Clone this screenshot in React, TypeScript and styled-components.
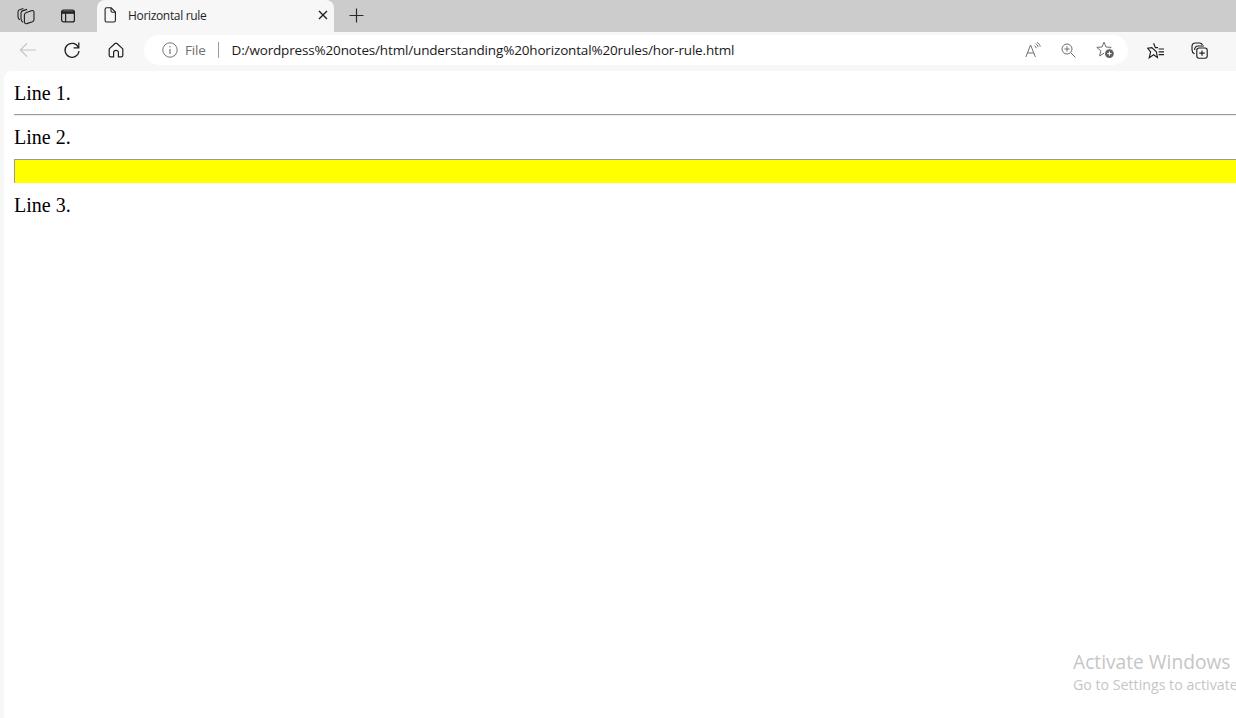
import React from 'react'
import styled, { createGlobalStyle } from 'styled-components'

const GlobalStyle = createGlobalStyle`
    html, body {
        margin: 0;
        padding: 0;
        height: 100%;
        overflow: hidden;
        background: #f7f7f7;
    }
    #root {
        height: 100%;
    }
`

//Browser chrome icons
const CollectionsTabIcon = () => (
    <svg width="18" height="18" viewBox="0 0 18 18" fill="none" stroke="#1f1f1f" strokeWidth="1.1">
        <path d="M6.4 1.6 L2.6 2.8 C1.6 3.1 1 3.9 1 5 V9.4 C1 10.8 1.6 12 2.8 12.8" />
        <path d="M10 2.4 L6 3.6 C5 3.9 4 4.8 4 6 V11.6 C4 13.2 4.8 14.6 6 15.4" />
        <path d="M9.4 5.4 L15 3.6 C16.2 3.3 17 4 17 5.2 V12.6 C17 13.6 16.4 14.4 15.4 14.8 L9.8 16.6 C8.4 17 7.4 16.2 7.4 15 V7.8 C7.4 6.6 8.2 5.8 9.4 5.4 Z" />
    </svg>
)

const VerticalTabsIcon = () => (
    <svg width="16" height="16" viewBox="0 0 16 16" fill="none" stroke="#1f1f1f" strokeWidth="1.2">
        <rect x="1.6" y="2.1" width="12.8" height="11.8" rx="2" />
        <path d="M5.6 5.6 V13.6" />
        <path d="M2 3.8 H14 V5.2 H2 Z" fill="#1f1f1f" />
    </svg>
)

const PageIcon = () => (
    <svg width="14" height="16" viewBox="0 0 14 16" fill="none" stroke="#1f1f1f" strokeWidth="1.1">
        <path d="M2.1 2.4 C2.1 1.4 2.8 0.8 3.6 0.8 H8.2 L12.4 5 V13.4 C12.4 14.4 11.7 15 10.9 15 H3.6 C2.8 15 2.1 14.4 2.1 13.4 Z" />
        <path d="M8 1 V3.8 C8 4.7 8.6 5.2 9.4 5.2 H12.2" />
    </svg>
)

const CloseIcon = () => (
    <svg width="10" height="10" viewBox="0 0 10 10" stroke="#1f1f1f" strokeWidth="1.4">
        <path d="M1 1 L9 9 M9 1 L1 9" />
    </svg>
)

const PlusIcon = () => (
    <svg width="15" height="15" viewBox="0 0 15 15" stroke="#2a2a2a" strokeWidth="1.2">
        <path d="M7.5 0.5 V14.5 M0.5 7.5 H14.5" />
    </svg>
)

const BackIcon = () => (
    <svg width="18" height="16" viewBox="0 0 18 16" fill="none" stroke="#c4c4c4" strokeWidth="1.2">
        <path d="M17 8 H1.4 M8 1.4 L1.4 8 L8 14.6" />
    </svg>
)

const RefreshIcon = () => (
    <svg width="18" height="18" viewBox="0 0 18 18" fill="none" stroke="#1f1f1f" strokeWidth="1.25">
        <path d="M15.4 6.4 A7 7 0 1 0 16 10" />
        <path d="M15.8 1.6 V6.8 H10.6" />
    </svg>
)

const HomeIcon = () => (
    <svg width="16" height="16" viewBox="0 0 16 16" fill="none" stroke="#1f1f1f" strokeWidth="1.2">
        <path d="M1.2 6.9 L7 1.5 C7.6 1 8.4 1 9 1.5 L14.8 6.9 V13.6 C14.8 14.3 14.3 14.8 13.6 14.8 H10.4 V10.4 C10.4 9.2 9.4 8.4 8 8.4 C6.6 8.4 5.6 9.2 5.6 10.4 V14.8 H2.4 C1.7 14.8 1.2 14.3 1.2 13.6 Z" />
    </svg>
)

const InfoIcon = () => (
    <svg width="16" height="16" viewBox="0 0 16 16" fill="none" stroke="#767676" strokeWidth="1">
        <circle cx="8" cy="8" r="7.2" />
        <path d="M8 7 V12" strokeWidth="1.2" />
        <circle cx="8" cy="4.8" r="0.7" fill="#767676" stroke="none" />
    </svg>
)

const ReadAloudIcon = () => (
    <svg width="16" height="16" viewBox="0 0 16 16" fill="none" stroke="#6f6f6f" strokeWidth="1">
        <path d="M0.8 15 L5.6 3 L10.4 15 M2.4 11 H8.8" />
        <path d="M9.4 3.6 C10.4 4.2 11 5 11.2 6.2 M10.6 1.6 C12 2.4 12.8 3.6 13 5 M12 0.4 C13.8 1.2 15 2.8 15.2 4.6" />
    </svg>
)

const ZoomIcon = () => (
    <svg width="15" height="15" viewBox="0 0 15 15" fill="none" stroke="#6f6f6f" strokeWidth="1">
        <circle cx="6" cy="6" r="5" />
        <path d="M9.6 9.6 L14.4 14.4 M3.4 6 H8.6 M6 3.4 V8.6" />
    </svg>
)

const FavoriteAddIcon = () => (
    <svg width="19" height="18" viewBox="0 0 19 18" fill="none" stroke="#6f6f6f" strokeWidth="1">
        <path d="M8 1.2 L10 6 L15.2 6.4 L11.2 9.8 L12.4 15 L8 12.2 L3.6 15 L4.8 9.8 L0.8 6.4 L6 6 Z" />
        <circle cx="13.4" cy="12.6" r="5.4" fill="#ffffff" stroke="none" />
        <circle cx="13.4" cy="12.6" r="4.4" fill="#5f5f5f" stroke="none" />
        <path d="M13.4 10.4 V14.8 M11.2 12.6 H15.6" stroke="#ffffff" strokeWidth="1" />
    </svg>
)

const FavoritesIcon = () => (
    <svg width="18" height="17" viewBox="0 0 18 17" fill="none" stroke="#1f1f1f" strokeWidth="1.15">
        <path d="M6.6 1.2 L8.4 5.6 H11 M9.4 9.8 L10.4 15.4 L6.6 12.8 L2.2 15.8 L3.6 10 L0.6 6.2 L4.8 5.6 Z" />
        <path d="M11.6 7 H17 M11.6 9.8 H17 M11.6 12.6 H17" />
    </svg>
)

const CollectionsIcon = () => (
    <svg width="17" height="17" viewBox="0 0 17 17" fill="none" stroke="#1f1f1f" strokeWidth="1.15">
        <path d="M3.6 11.8 C2 11 1 9.6 1 8 V4.6 C1 2.6 2.6 1 4.6 1 H8.6 C10 1 11 1.8 11.4 3" />
        <path d="M3.6 8 C3.6 5.4 5 4 7 4 H13" />
        <rect x="5.8" y="6" width="10.4" height="10.2" rx="2.2" />
        <path d="M11 8.4 V13.8 M8.3 11.1 H13.7" />
    </svg>
)

const App: React.FC = () => {
    return (
        <Window>
            <GlobalStyle />
            <TabStrip>
                <StripButton>
                    <CollectionsTabIcon />
                </StripButton>
                <StripButton>
                    <VerticalTabsIcon />
                </StripButton>
                <ActiveTab>
                    <PageIcon />
                    <TabTitle>Horizontal rule</TabTitle>
                    <CloseIcon />
                </ActiveTab>
                <NewTab>
                    <PlusIcon />
                </NewTab>
            </TabStrip>

            <Toolbar>
                <NavButton>
                    <BackIcon />
                </NavButton>
                <NavButton>
                    <RefreshIcon />
                </NavButton>
                <NavButton>
                    <HomeIcon />
                </NavButton>
                <AddressBar>
                    <InfoIcon />
                    <Scheme>File</Scheme>
                    <Divider />
                    <Url>D:/wordpress%20notes/html/understanding%20horizontal%20rules/hor-rule.html</Url>
                    <AddressActions>
                        <ReadAloudIcon />
                        <ZoomIcon />
                        <FavoriteAddIcon />
                    </AddressActions>
                </AddressBar>
                <ToolbarActions>
                    <FavoritesIcon />
                    <CollectionsIcon />
                </ToolbarActions>
            </Toolbar>

            <Viewport>
                <Line>Line 1.</Line>
                <PlainRule />
                <Line>Line 2.</Line>
                <YellowRule />
                <Line>Line 3.</Line>
                <Watermark>
                    <WatermarkTitle>Activate Windows</WatermarkTitle>
                    <WatermarkText>Go to Settings to activate Windows.</WatermarkText>
                </Watermark>
            </Viewport>
        </Window>
    )
}

export default App

const Window = styled.div`
    display: flex;
    flex-direction: column;
    width: 1236px;
    height: 718px;
    overflow: hidden;
    background: #f7f7f7;
`

const TabStrip = styled.div`
    display: flex;
    align-items: flex-end;
    height: 32px;
    flex-shrink: 0;
    padding-left: 5px;
    background: #cccccc;
`

const StripButton = styled.div`
    display: flex;
    align-items: center;
    justify-content: center;
    width: 42px;
    height: 31px;
    margin-bottom: 1px;
`

const ActiveTab = styled.div`
    display: flex;
    align-items: center;
    width: 237px;
    height: 32px;
    margin-left: 8px;
    padding: 0 6px 2px 6px;
    box-sizing: border-box;
    background: #f7f7f7;
    border-radius: 8px 8px 0 0;
`

const TabTitle = styled.span`
    flex: 1;
    margin-left: 11px;
    color: #1f1f1f;
    font: 12px 'Open Sans', 'Liberation Sans', sans-serif;
    letter-spacing: -0.33px;
`

const NewTab = styled.div`
    display: flex;
    align-items: center;
    justify-content: center;
    width: 44px;
    height: 32px;
    padding-bottom: 2px;
    box-sizing: border-box;
`

const Toolbar = styled.div`
    display: flex;
    align-items: center;
    height: 39px;
    flex-shrink: 0;
    padding: 0 0 3px 6px;
    box-sizing: border-box;
    background: #f7f7f7;
`

const NavButton = styled.div`
    display: flex;
    align-items: center;
    justify-content: center;
    width: 44px;
    height: 32px;
`

const AddressBar = styled.div`
    display: flex;
    align-items: center;
    width: 984px;
    height: 30px;
    margin-left: 6px;
    padding: 0 13px 0 18px;
    box-sizing: border-box;
    background: #ffffff;
    border-radius: 15px;
`

const Scheme = styled.span`
    margin-left: 7px;
    color: #6f6f6f;
    font: 13.5px 'Open Sans', 'Liberation Sans', sans-serif;
    letter-spacing: -0.2px;
`

const Divider = styled.span`
    width: 1px;
    height: 16px;
    margin: 0 13px 0 12px;
    background: #9a9a9a;
`

const Url = styled.span`
    flex: 1;
    color: #1a1a1a;
    font: 13.5px 'Open Sans', 'Liberation Sans', sans-serif;
    letter-spacing: -0.16px;
    white-space: nowrap;
`

const AddressActions = styled.div`
    display: flex;
    align-items: center;
    gap: 20px;
`

const ToolbarActions = styled.div`
    display: flex;
    align-items: center;
    gap: 26px;
    margin-left: 19px;
`

const Viewport = styled.main`
    position: relative;
    flex: 1;
    margin-left: 4px;
    padding: 10px 0 0 10px;
    overflow: hidden;
    background: #ffffff;
    border-radius: 8px 0 0 0;
`

const Line = styled.p`
    margin: 0;
    color: #000000;
    font: 20px/24px 'Liberation Serif', 'Times New Roman', serif;
`

const PlainRule = styled.hr`
    margin: 9px 0;
    border: 0;
    border-top: 1px solid #9a9a9a;
    border-bottom: 1px solid #eeeeee;
`

const YellowRule = styled.hr`
    height: 24px;
    margin: 10px 0;
    box-sizing: border-box;
    background: #ffff00;
    border: 0;
    border-top: 1px solid #9a9a9a;
    border-left: 1px solid #9a9a9a;
`

const Watermark = styled.div`
    position: absolute;
    top: 578px;
    left: 1069px;
    white-space: nowrap;
    font-family: 'Open Sans', 'Liberation Sans', sans-serif;
    color: #c6c6c6;
`

const WatermarkTitle = styled.div`
    font-size: 19.2px;
    line-height: 25px;
`

const WatermarkText = styled.div`
    font-size: 14.2px;
    line-height: 21px;
`
